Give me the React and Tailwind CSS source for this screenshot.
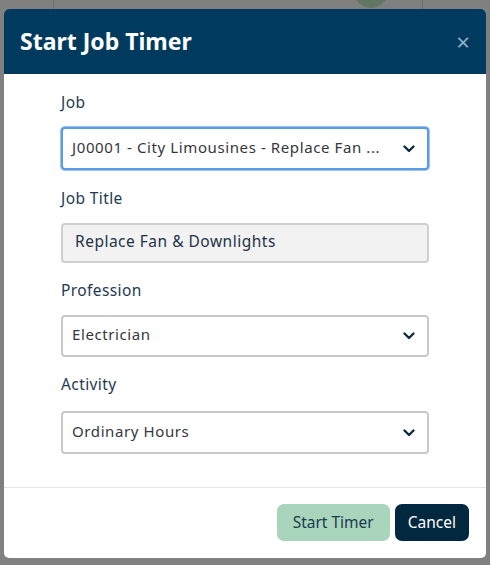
// StartJobTimerModal — dialog for starting a timer against a job.
// Static mock: job, title, profession and activity fields plus footer actions.

const FONT = { fontFamily: '"Noto Sans", "Open Sans", sans-serif' };

function Chevron() {
  return (
    <svg width="12" height="8" viewBox="0 0 12 8" className="shrink-0">
      <path d="M1.5 1.5 L6 6 L10.5 1.5" fill="none" stroke="#0d2b45" strokeWidth="2.4" strokeLinecap="round" strokeLinejoin="round" />
    </svg>
  );
}

function SelectBox({ value, focused, h = 'h-[43px]' }) {
  const border = focused
    ? 'border-[#5b9be6] shadow-[0_0_0_1px_#9cc3f0]'
    : 'border-[#c9c9c9]';
  return (
    <div className={'flex items-center gap-3 rounded-[4px] border-2 bg-white pl-[9px] pr-[12px] ' + h + ' ' + border}>
      <span className="flex-1 min-w-0 whitespace-nowrap pb-[3px] text-[15px] text-[#33383d] tracking-[0.6px]">{value}</span>
      <Chevron />
    </div>
  );
}

function Label({ children }) {
  return <p className="text-[15.5px] leading-6 text-[#1e3a52] tracking-[0.4px]">{children}</p>;
}

export default function App() {
  return (
    <div className="relative h-[565px] w-[490px] overflow-hidden bg-[#808080]" style={FONT}>
      {/* dimmed page behind the dialog */}
      <div className="absolute left-[53px] top-0 h-[10px] w-px bg-[#6e6e6e]" />
      <div className="absolute left-[422px] top-0 h-[10px] w-px bg-[#6e6e6e]" />
      <div className="absolute left-[354px] top-[-26px] h-[34px] w-[34px] rounded-full bg-[#637563]" />

      <div className="absolute left-[4px] top-[9px] flex w-[482px] flex-col overflow-hidden rounded-[5px] bg-white">
        <div className="flex h-[65px] items-center justify-between bg-[#003b5f] pl-[16px] pr-[16px]">
          <h2 className="text-[23px] font-bold text-white">Start Job Timer</h2>
          <span className="text-[24px] leading-none text-[#8fb0c6]">×</span>
        </div>

        <div className="flex flex-col px-[57px] pt-[16px] pb-[33px]">
          <Label>Job</Label>
          <div className="mt-[13px]">
            <SelectBox value="J00001 - City Limousines - Replace Fan ..." focused />
          </div>

          <div className="mt-[16px]"><Label>Job Title</Label></div>
          <div className="mt-[13px] flex h-[40px] items-center rounded-[4px] border-2 border-[#cfcfcf] bg-[#f2f2f2] px-[12px]">
            <span className="pb-[2px] text-[15.5px] text-[#1e3346] tracking-[0.5px]">Replace Fan &amp; Downlights</span>
          </div>

          <div className="mt-[15px]"><Label>Profession</Label></div>
          <div className="mt-[13px]">
            <SelectBox value="Electrician" h="h-[42px]" />
          </div>

          <div className="mt-[15px]"><Label>Activity</Label></div>
          <div className="mt-[15px]">
            <SelectBox value="Ordinary Hours" h="h-[43px]" />
          </div>
        </div>

        <div className="flex justify-end gap-[5px] border-t border-[#e4e4e4] pt-[16px] pb-[17px] pr-[17px]">
          <button className="h-[37px] rounded-[7px] bg-[#a8d5bb] px-[16px] text-[15.5px] text-[#1b3a50]">Start Timer</button>
          <button className="h-[37px] rounded-[7px] bg-[#02283f] px-[13px] text-[15.5px] text-white">Cancel</button>
        </div>
      </div>
    </div>
  );
}
